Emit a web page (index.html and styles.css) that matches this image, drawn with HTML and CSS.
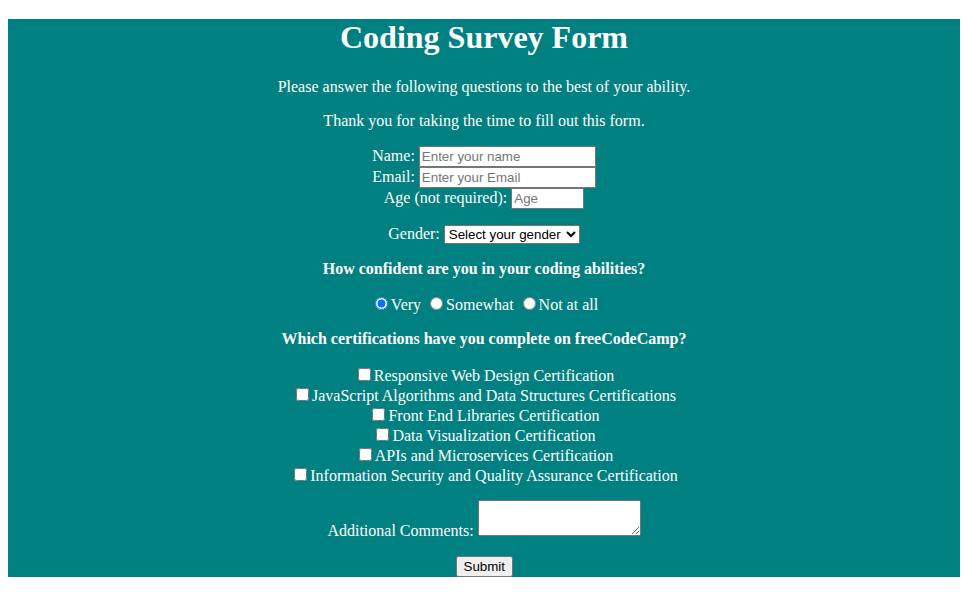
FILE: index.html
```html
<!DOCTYPE html>
<html>
<head>
<meta charset="utf-8">
<title>Coding Survey Form</title>
<link rel="stylesheet" href="styles.css">
</head>
<body>
<div class="main">
  <h1 class="title">Coding Survey Form</h1>
  <p class="desc">Please answer the following questions to the best of your ability.</p>
  <p class="desc">Thank you for taking the time to fill out this form.</p>
  <form class="survey">
    <label>Name: <input class="field wide" type="text" placeholder="Enter your name"></label><br>
    <label>Email: <input class="field wide" type="email" placeholder="Enter your Email"></label><br>
    <label>Age (not required): <input class="field age" type="text" placeholder="Age"></label>
    <p class="row">Gender: <select class="sel"><option>Select your gender</option><option>Male</option><option>Female</option><option>Other</option></select></p>
    <p class="row"><strong>How confident are you in your coding abilities?</strong></p>
    <p class="row">
      <label><input type="radio" name="conf" checked>Very</label>
      <label><input type="radio" name="conf">Somewhat</label>
      <label><input type="radio" name="conf">Not at all</label>
    </p>
    <p class="row"><strong>Which certifications have you complete on freeCodeCamp?</strong></p>
    <div class="checks">
      <label class="chk"><input type="checkbox">Responsive Web Design Certification</label>
      <label class="chk"><input type="checkbox">JavaScript Algorithms and Data Structures Certifications</label>
      <label class="chk"><input type="checkbox">Front End Libraries Certification</label>
      <label class="chk"><input type="checkbox">Data Visualization Certification</label>
      <label class="chk"><input type="checkbox">APIs and Microservices Certification</label>
      <label class="chk"><input type="checkbox">Information Security and Quality Assurance Certification</label>
    </div>
    <p class="row comments-row">Additional Comments: <textarea class="comments"></textarea></p>
    <button class="submit" type="submit">Submit</button>
  </form>
</div>
</body>
</html>
```
FILE: styles.css
```css
html, body {
  background: #ffffff;
}
body {
  margin: 8px;
  font-family: "Liberation Serif", "Times New Roman", serif;
  font-size: 16px;
}
.main {
  margin-top: 11px;
  background: #008080;
  color: #ffffff;
  text-align: center;
  display: flow-root;
}
.title {
  font-size: 32px;
  font-weight: bold;
  margin: 0 0 22px;
  line-height: 37px;
}
.desc {
  margin: 16px 0;
  line-height: 18px;
}
.survey {
  margin: 0;
}
.field {
  font-family: "Liberation Sans", Arial, sans-serif;
  font-size: 13.33px;
  box-sizing: border-box;
  height: 21px;
  padding: 1px 2px;
  border: 1px solid #767676;
  border-radius: 0;
  margin: 0;
}
.field::placeholder {
  color: #757575;
}
.wide {
  width: 177px;
}
.age {
  width: 73px;
}
.row {
  margin: 16px 0;
}
.comments-row {
  margin-top: 15px;
}
.sel {
  font-family: "Liberation Sans", Arial, sans-serif;
  font-size: 13.33px;
  box-sizing: border-box;
  width: 136px;
  height: 19px;
  margin: 0;
}
.checks {
  display: block;
  padding-top: 1px;
}
.chk {
  display: block;
  height: 20px;
  line-height: 20px;
}
.chk input {
  margin: 3px 3px 2px 4px;
}
.comments {
  box-sizing: border-box;
  width: 163px;
  height: 36px;
  margin: 0;
  vertical-align: baseline;
}
.submit {
  font-family: "Liberation Sans", Arial, sans-serif;
  font-size: 13.33px;
  box-sizing: border-box;
  width: 57px;
  height: 21px;
  margin: 0;
  display: inline-block;
  vertical-align: top;
}
```
